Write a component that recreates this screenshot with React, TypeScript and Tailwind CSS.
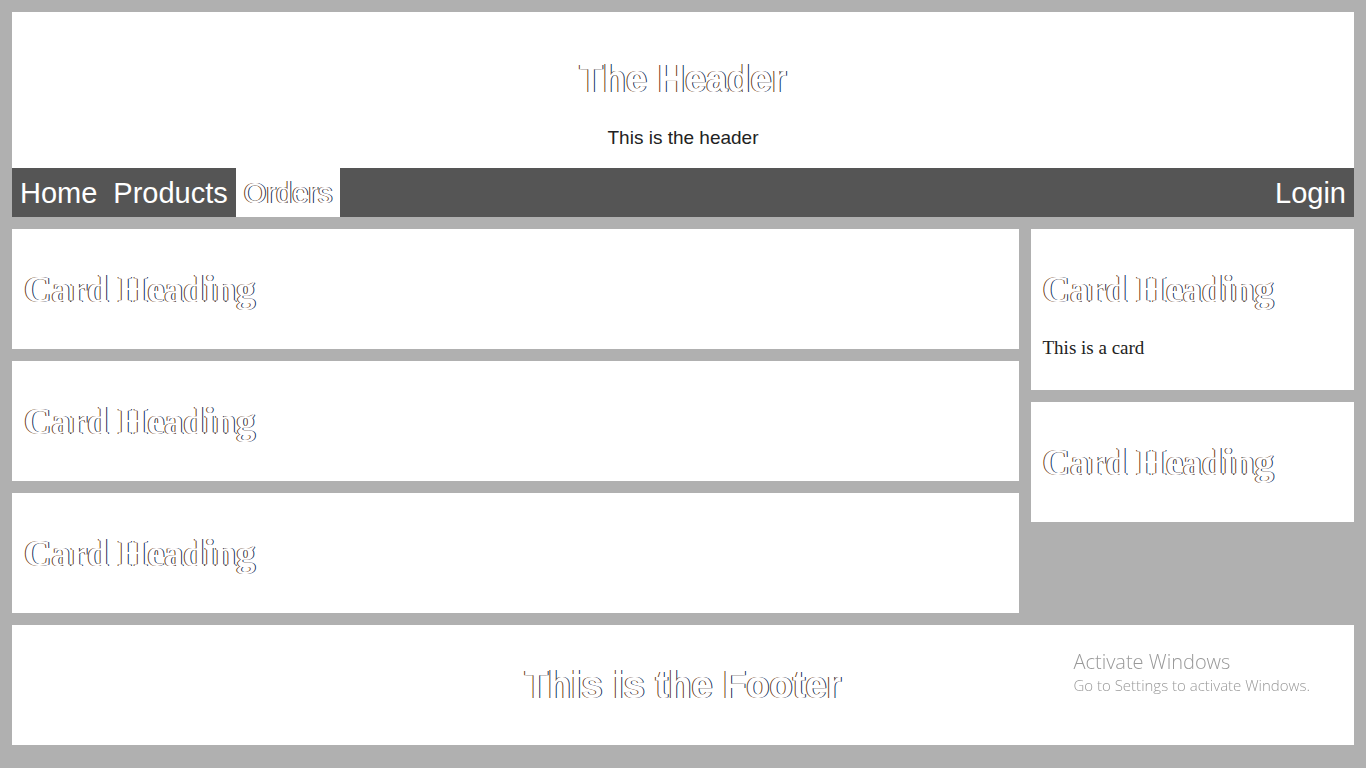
import type { ReactNode } from "react";

const outline = "text-white [text-shadow:-1px_0_#6b3a14,1px_0_#12305c]";

function Heading({ children, level = 2 }: { children: ReactNode; level?: 1 | 2 }) {
  const Tag = level === 1 ? "h1" : "h2";
  return <Tag className={`my-[26px] text-[38px] leading-[44px] font-bold ${outline}`}>{children}</Tag>;
}

function Card({ text }: { text?: string }) {
  return (
    <article className="flow-root bg-white px-3 py-3">
      <Heading>Card Heading</Heading>
      {text && <p className="mb-[19px] text-[19px] leading-[22px] text-[#222]">{text}</p>}
    </article>
  );
}

function NavLink({ label, active = false, end = false }: { label: string; active?: boolean; end?: boolean }) {
  return (
    <a
      href={`#${label.toLowerCase()}`}
      aria-current={active ? "page" : undefined}
      className={`px-2 pt-[9px] pb-[7px] text-[29px] leading-[33px] ${active ? `bg-white ${outline}` : "text-white"} ${end ? "ml-auto" : ""}`}
    >
      {label}
    </a>
  );
}

export default function App() {
  return (
    <div className="min-h-screen bg-[#b0b0b0] p-3 font-['Liberation_Serif',serif]">
      <header className="flow-root bg-white px-3 pt-[19px] text-center font-['Liberation_Sans',sans-serif]">
        <Heading level={1}>The Header</Heading>
        <p className="mb-[19px] text-[19px] leading-[22px] text-[#222]">This is the header</p>
      </header>
      <nav className="flex bg-[#555] font-['Liberation_Sans',sans-serif]">
        <NavLink label="Home" />
        <NavLink label="Products" />
        <NavLink label="Orders" active />
        <NavLink label="Login" end />
      </nav>
      <main className="mt-3 flex items-start gap-3">
        <section className="flex w-3/4 shrink-0 flex-col gap-3">
          <Card />
          <Card />
          <Card />
        </section>
        <aside className="flex min-w-0 flex-1 flex-col gap-3">
          <Card text="This is a card" />
          <Card />
        </aside>
      </main>
      <footer className="mt-3 flow-root bg-white p-3 text-center font-['Liberation_Sans',sans-serif]">
        <Heading>This is the Footer</Heading>
      </footer>
      <div className="pointer-events-none fixed right-14 bottom-[72px] font-['Open_Sans','Noto_Sans',sans-serif] font-light text-[#999]">
        <p className="text-[20px] leading-6">Activate Windows</p>
        <p className="text-[15px] leading-[22px]">Go to Settings to activate Windows.</p>
      </div>
    </div>
  );
}
